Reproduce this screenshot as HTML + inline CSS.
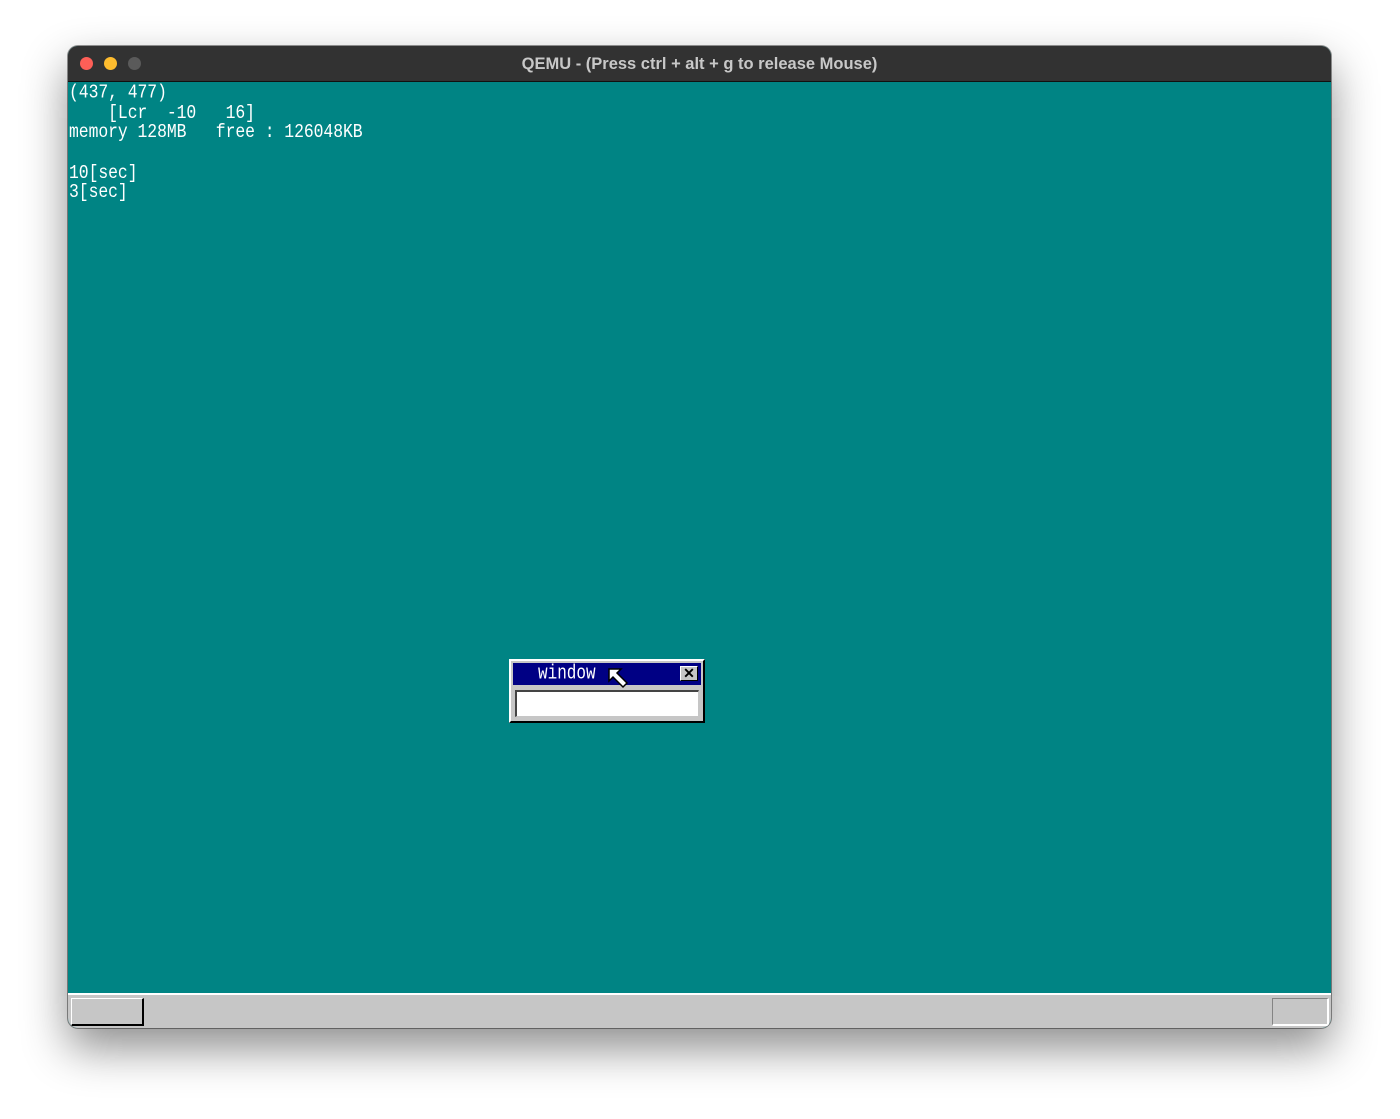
<!DOCTYPE html>
<html><head><style>
body{margin:0;width:1400px;height:1119px;background:#fff;position:relative;overflow:hidden;font-family:"Liberation Sans",sans-serif}
.win{position:absolute;left:68px;top:46px;width:1263px;height:982px;border-radius:10px;overflow:hidden;box-shadow:0 20px 45px rgba(0,0,0,.45),0 0 0 1px rgba(0,0,0,.4);background:#008484}
.tb{position:absolute;left:0;top:0;width:100%;height:35px;background:#323232;border-bottom:1px solid #111}
.tb .t{position:absolute;width:100%;text-align:center;top:9px;color:#c8c8c8;font-weight:bold;font-size:16.5px}
.dot{position:absolute;top:11px;width:13px;height:13px;border-radius:50%}
.scr{position:absolute;left:0;top:36px;width:1263px;height:946px;background:#008484}
.txt{position:absolute;left:1px;top:1px;color:#fff;font-family:"Liberation Mono",monospace;font-size:16.4px;line-height:16.67px;white-space:pre;transform:scaleY(1.2);transform-origin:0 0;letter-spacing:-0.05px}
.task{position:absolute;left:0;top:911px;width:100%;height:35px;background:#c6c6c6;border-top:2px solid #fff}
.bl{position:absolute;left:3px;top:3px;width:70px;height:25px;border-top:1px solid #fff;border-left:1px solid #fff;border-right:2px solid #000;border-bottom:2px solid #000;background:#c6c6c6}
.br{position:absolute;left:1204px;top:3px;width:54px;height:25px;border-top:1px solid #848484;border-left:1px solid #848484;border-right:2px solid #fff;border-bottom:2px solid #fff}
.dlg{position:absolute;left:441px;top:577px;width:192px;height:60px;background:#c6c6c6;border-top:2px solid #fff;border-left:2px solid #fff;border-right:2px solid #000;border-bottom:2px solid #000}
.dt{position:absolute;left:2px;top:2px;width:188px;height:22px;background:#000084}
.dt span{position:absolute;left:25px;top:-1px;color:#fff;font-family:"Liberation Mono",monospace;font-size:16px;transform:scaleY(1.25);transform-origin:0 0;letter-spacing:0px}
.x{position:absolute;left:167px;top:3px;width:16px;height:13px;background:#c6c6c6;border-top:1px solid #fff;border-left:1px solid #fff;border-right:1px solid #000;border-bottom:1px solid #000;font-size:14px;line-height:13px;text-align:center;color:#000;font-weight:bold}
.inp{position:absolute;left:4px;top:29px;width:181px;height:24px;background:#fff;border-top:2px solid #444;border-left:2px solid #444;border-right:1px solid #c6c6c6;border-bottom:1px solid #c6c6c6}
</style></head><body>
<div class="win">
<div class="tb"><div class="dot" style="left:12px;background:#fe5f57"></div><div class="dot" style="left:36px;background:#febc2e"></div><div class="dot" style="left:60px;background:#5a5a5a"></div><div class="t">QEMU - (Press ctrl + alt + g to release Mouse)</div></div>
<div class="scr">
<div class="txt">(437, 477)
    [Lcr  -10   16]
memory 128MB   free : 126048KB

10[sec]
3[sec]</div>
<div class="dlg"><div class="dt"><span>window</span>
<svg style="position:absolute;left:95px;top:5px" width="22" height="22" viewBox="0 0 22 22"><path d="M1 1 L13 1 L9 5 L19 15 L15 19 L5 9 L1 13 Z" fill="#fff" stroke="#000" stroke-width="1.5"/></svg>
<div class="x">✕</div></div><div class="inp"></div></div>
<div class="task"><div class="bl"></div><div class="br"></div></div>
</div>
</div>
</body></html>
